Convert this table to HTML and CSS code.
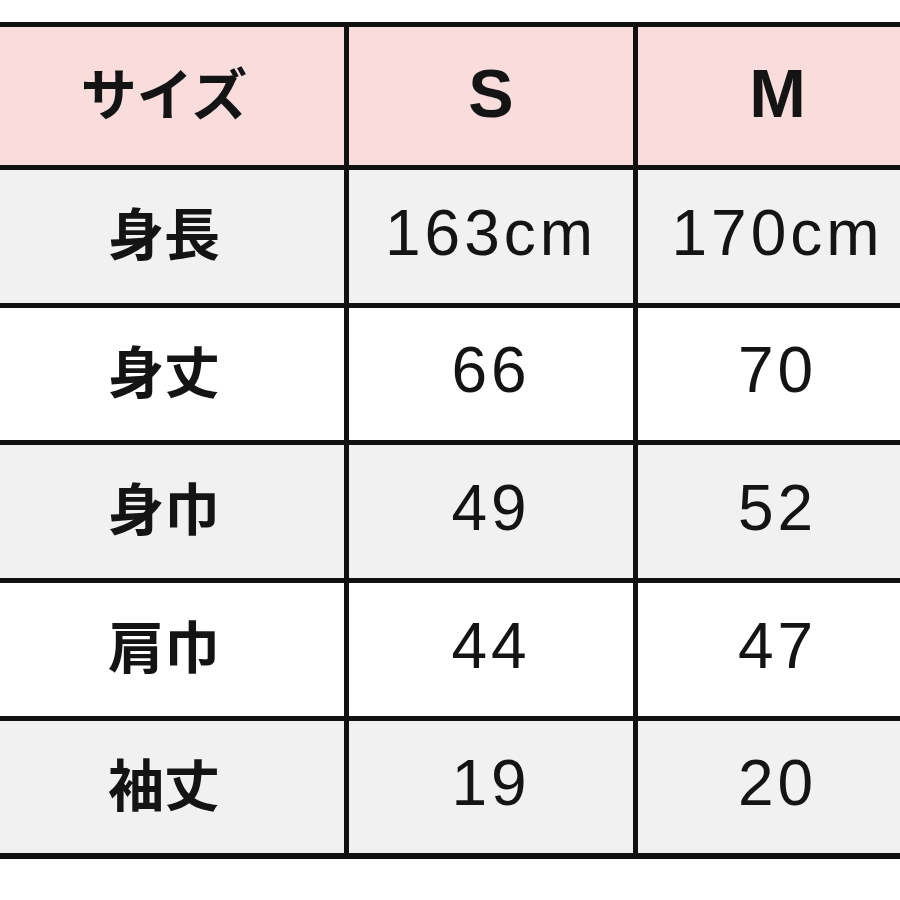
FILE: index.html
```html
<!DOCTYPE html>
<html lang="ja">
<head>
<meta charset="utf-8">
<title>サイズ表</title>
<link rel="stylesheet" href="styles.css">
</head>
<body>
<div class="sheet">
  <div class="size-table">
    <div class="cell head jp">サイズ</div>
    <div class="cell head en">S</div>
    <div class="cell head en">M</div>

    <div class="cell gray jp">身長</div>
    <div class="cell gray num">163cm</div>
    <div class="cell gray num">170cm</div>

    <div class="cell white jp">身丈</div>
    <div class="cell white num">66</div>
    <div class="cell white num">70</div>

    <div class="cell gray jp">身巾</div>
    <div class="cell gray num">49</div>
    <div class="cell gray num">52</div>

    <div class="cell white jp">肩巾</div>
    <div class="cell white num">44</div>
    <div class="cell white num">47</div>

    <div class="cell gray jp">袖丈</div>
    <div class="cell gray num">19</div>
    <div class="cell gray num">20</div>
  </div>
</div>
</body>
</html>
```
FILE: styles.css
```css
html, body {
  margin: 0;
  padding: 0;
  background: #ffffff;
}
body {
  width: 900px;
  height: 900px;
  overflow: hidden;
}
.sheet {
  padding-top: 22px;
}
.size-table {
  margin-left: -16px;
  width: 933px;
  display: grid;
  grid-template-columns: 360px 284px 279px;
  grid-template-rows: 138px 133px 132px 133px 133px 132px;
  gap: 5px;
  background: #111111;
  border-top: 5px solid #111111;
  border-bottom: 6px solid #111111;
}
.cell {
  display: flex;
  align-items: center;
  justify-content: center;
  color: #141414;
}
.head { background: #f9dcdc; }
.gray { background: #f1f1f1; }
.white { background: #ffffff; }
.jp {
  font-family: "Noto Sans CJK JP", sans-serif;
  font-weight: 700;
  font-size: 56px;
  padding-bottom: 12px;
}
.en {
  font-family: "Liberation Sans", Arial, sans-serif;
  font-weight: 700;
  font-size: 68px;
  padding-bottom: 6px;
}
.num {
  font-family: "Liberation Sans", Arial, sans-serif;
  font-weight: 400;
  font-size: 64px;
  letter-spacing: 4px;
  padding-bottom: 8px;
}
```
